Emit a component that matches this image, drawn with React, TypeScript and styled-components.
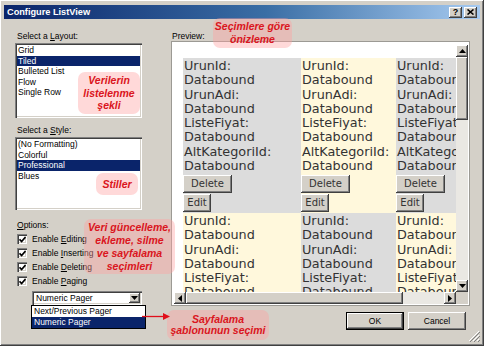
import styled, { createGlobalStyle } from 'styled-components'

const FACE = '#d4d0c8'
const UI_FONT = '"Liberation Sans", Arial, sans-serif'

const GlobalStyle = createGlobalStyle`
  html, body { margin: 0; padding: 0; background: ${FACE}; }
  body { font-family: ${UI_FONT}; font-size: 8.5px; color: #000; }
  * { box-sizing: border-box; }
`

const raised = `box-shadow: inset -1px -1px #404040, inset 1px 1px #fff, inset -2px -2px #808080;`
const sunken = `box-shadow: inset 1px 1px #808080, inset 2px 2px #404040, inset -1px -1px #fff, inset -2px -2px ${FACE};`

const Window = styled.div`
    position: relative;
    width: 484px;
    height: 346px;
    padding: 5px 4px 4px 4px;
    background: ${FACE};
    display: flex;
    flex-direction: column;
    overflow: hidden;
    ${raised}
`

const TitleBar = styled.div`
    height: 14px;
    display: flex;
    align-items: center;
    justify-content: space-between;
    padding: 0 3px;
    background: linear-gradient(90deg, #0a246a 0%, #3a6ea5 55%, #a6caf0 100%);
`

const TitleText = styled.span`
    color: #fff;
    font-weight: bold;
    font-size: 9.2px;
`

const TitleButtons = styled.div`
    display: flex;
    gap: 2px;
`

const TitleButton = styled.div`
    width: 13px;
    height: 11px;
    background: ${FACE};
    ${raised}
    display: flex;
    align-items: center;
    justify-content: center;
    font-weight: bold;
    font-size: 9px;
    line-height: 1;
`

const Body = styled.div`
    flex: 1;
    display: flex;
    gap: 25px;
    padding: 12px 10px 0 11px;
`

const LeftColumn = styled.div`
    width: 131px;
    display: flex;
    flex-direction: column;
`

const FieldLabel = styled.div<{ $top?: number }>`
    height: 11px;
    line-height: 11px;
    padding-left: 2px;
    margin-top: ${(p) => p.$top ?? 0}px;
`

const ListBox = styled.div<{ $height: number }>`
    width: 127px;
    height: ${(p) => p.$height}px;
    margin-top: 1px;
    padding: 2px;
    background: #fff;
    ${sunken}
`

const ListItem = styled.div<{ $selected?: boolean }>`
    height: 10.5px;
    line-height: 10.5px;
    padding-left: 1px;
    white-space: nowrap;
    background: ${(p) => (p.$selected ? '#0a246a' : 'transparent')};
    color: ${(p) => (p.$selected ? '#fff' : '#000')};
`

const CheckList = styled.div`
    margin-top: 1px;
    display: flex;
    flex-direction: column;
`

const CheckRow = styled.label`
    height: 14px;
    display: flex;
    align-items: center;
    gap: 5px;
    padding-left: 2px;
`

const CheckBox = styled.span`
    width: 10px;
    height: 10px;
    background: #fff;
    ${sunken}
    display: flex;
    align-items: center;
    justify-content: center;
`

const SelectWrap = styled.div`
    position: relative;
    margin: 3px 0 0 17px;
    width: 110px;
    height: 14px;
    padding: 2px;
    background: #fff;
    ${sunken}
    display: flex;
    align-items: center;
`

const SelectText = styled.span`
    flex: 1;
    padding-left: 2px;
    line-height: 10px;
`

const SelectArrow = styled.span`
    width: 11px;
    height: 10px;
    background: ${FACE};
    ${raised}
    display: flex;
    align-items: center;
    justify-content: center;
`

const PopupList = styled.div`
    position: absolute;
    top: 14px;
    left: -1px;
    width: 115px;
    background: #fff;
    border: 1px solid #000;
    z-index: 2;
`

const PopupItem = styled.div<{ $selected?: boolean }>`
    height: 11px;
    line-height: 11px;
    padding-left: 2px;
    background: ${(p) => (p.$selected ? '#0a246a' : '#fff')};
    color: ${(p) => (p.$selected ? '#fff' : '#000')};
`

const RightColumn = styled.div`
    flex: 1;
    display: flex;
    flex-direction: column;
`

const PreviewLabel = styled.div`
    height: 10px;
    line-height: 10px;
    padding-left: 1px;
`

const PreviewBox = styled.div`
    height: 265px;
    background: #fff;
    border: 1px solid #9c9a94;
    padding: 3px 1px 1px 2px;
`

const Scroller = styled.div`
    height: 100%;
    display: grid;
    grid-template-columns: 1fr 12px;
    grid-template-rows: 1fr 12px;
    min-height: 0;
`

const Viewport = styled.div`
    overflow: hidden;
    min-height: 0;
    background: #fff;
    padding: 13px 0 0 9px;
`

const TileGrid = styled.div`
    display: grid;
    grid-template-columns: 118px 95px 96px;
    width: max-content;
`

const Tile = styled.div<{ $alt?: boolean; $height: number }>`
    height: ${(p) => p.$height}px;
    padding: 1px 0 0 1px;
    background: ${(p) => (p.$alt ? '#fff8dc' : '#dcdcdc')};
    color: #333;
    font-family: "DejaVu Sans", Verdana, sans-serif;
    font-size: 12.8px;
    line-height: 14.3px;
    white-space: nowrap;
    overflow: hidden;
`

const TileButton = styled.div<{ $width: number; $top: number }>`
    width: ${(p) => p.$width}px;
    height: 18px;
    margin-top: ${(p) => p.$top}px;
    margin-left: -1px;
    background: ${FACE};
    ${raised}
    color: #333;
    font-size: 10px;
    line-height: 18px;
    text-align: center;
`

const VScroll = styled.div`
    grid-column: 2;
    grid-row: 1;
    display: flex;
    flex-direction: column;
`

const HScroll = styled.div`
    grid-column: 1;
    grid-row: 2;
    display: flex;
`

const ScrollArrow = styled.div`
    flex: 0 0 12px;
    width: 12px;
    height: 12px;
    background: ${FACE};
    ${raised}
    display: flex;
    align-items: center;
    justify-content: center;
`

const ScrollThumb = styled.div<{ $size: number }>`
    flex: 0 0 ${(p) => p.$size}px;
    background: ${FACE};
    ${raised}
`

const ScrollTrack = styled.div`
    flex: 1;
    background: #eae8e3;
`

const Corner = styled.div`
    background: ${FACE};
`

const Footer = styled.div`
    display: flex;
    justify-content: flex-end;
    gap: 4px;
    margin-top: 6px;
    padding-right: 4px;
`

const DialogButton = styled.div<{ $default?: boolean }>`
    width: 58px;
    height: 18px;
    background: ${FACE};
    ${(p) =>
        p.$default
            ? `border: 1px solid #000; box-shadow: inset -1px -1px #404040, inset 1px 1px #fff, inset -2px -2px #808080;`
            : raised}
    display: flex;
    align-items: center;
    justify-content: center;
`

const Callout = styled.div<{ $x: number; $y: number; $w: number; $h: number; $lh?: number }>`
    position: absolute;
    left: ${(p) => p.$x}px;
    top: ${(p) => p.$y}px;
    width: ${(p) => p.$w}px;
    height: ${(p) => p.$h}px;
    border-radius: 7px;
    background: rgba(255, 160, 160, 0.4);
    color: #da1520;
    font-family: ${UI_FONT};
    font-size: 10.5px;
    font-weight: bold;
    font-style: italic;
    line-height: ${(p) => p.$lh ?? 12.6}px;
    text-align: center;
    display: flex;
    flex-direction: column;
    justify-content: center;
    white-space: nowrap;
    z-index: 3;
`

const PointerArrow = styled.svg`
    position: absolute;
    left: 142px;
    top: 312px;
    z-index: 3;
`

const ResizeGrip = styled.svg`
    position: absolute;
    right: 4px;
    bottom: 4px;
`

const Triangle = ({ dir }: { dir: 'up' | 'down' | 'left' | 'right' }) => {
    const pts = {
        up: '0,4 7,4 3.5,0',
        down: '0,0 7,0 3.5,4',
        left: '4,0 4,7 0,3.5',
        right: '0,0 0,7 4,3.5',
    }[dir]
    const vertical = dir === 'up' || dir === 'down'
    return (
        <svg width={vertical ? 7 : 4} height={vertical ? 4 : 7}>
            <polygon points={pts} fill="#000" />
        </svg>
    )
}

const fields = ['UrunId:', 'UrunAdi:', 'ListeFiyat:', 'AltKategoriId:']

// first row shows the whole item, second row is cut by the preview's bottom edge
const ProductTile = ({ alt, full }: { alt: boolean; full: boolean }) => (
    <Tile $alt={alt} $height={full ? 155 : 80}>
        {(full ? fields : fields.slice(0, 3)).map((f) => (
            <div key={f}>
                <div>{f}</div>
                <div>Databound</div>
            </div>
        ))}
        {full && (
            <>
                <TileButton $width={49} $top={1.6}>
                    Delete
                </TileButton>
                <TileButton $width={28} $top={1}>
                    Edit
                </TileButton>
            </>
        )}
    </Tile>
)

const layouts = ['Grid', 'Tiled', 'Bulleted List', 'Flow', 'Single Row']
const styles = ['(No Formatting)', 'Colorful', 'Professional', 'Blues']
const options: [string, string, string][] = [
    ['Enable ', 'E', 'diting'],
    ['Enable ', 'I', 'nserting'],
    ['Enable ', 'D', 'eleting'],
    ['Enable ', 'P', 'aging'],
]

const Check = () => (
    <svg width="7" height="7" viewBox="0 0 7 7">
        <polyline points="0.5,3.3 2.6,5.5 6.5,1" fill="none" stroke="#000" strokeWidth="1.7" />
    </svg>
)

export default function App() {
    return (
        <>
            <GlobalStyle />
            <Window>
                <TitleBar>
                    <TitleText>Configure ListView</TitleText>
                    <TitleButtons>
                        <TitleButton>?</TitleButton>
                        <TitleButton>
                            <svg width="7" height="6" viewBox="0 0 7 6">
                                <path d="M0.5 0.5 L6.5 5.5 M6.5 0.5 L0.5 5.5" stroke="#000" strokeWidth="1.6" />
                            </svg>
                        </TitleButton>
                    </TitleButtons>
                </TitleBar>
                <Body>
                    <LeftColumn>
                        <FieldLabel>
                            Select a <u>L</u>ayout:
                        </FieldLabel>
                        <ListBox $height={75}>
                            {layouts.map((l) => (
                                <ListItem key={l} $selected={l === 'Tiled'}>
                                    {l}
                                </ListItem>
                            ))}
                        </ListBox>
                        <FieldLabel $top={7}>
                            Select a <u>S</u>tyle:
                        </FieldLabel>
                        <ListBox $height={73}>
                            {styles.map((s) => (
                                <ListItem key={s} $selected={s === 'Professional'}>
                                    {s}
                                </ListItem>
                            ))}
                        </ListBox>
                        <FieldLabel $top={10}>
                            <u>O</u>ptions:
                        </FieldLabel>
                        <CheckList>
                            {options.map(([a, k, b]) => (
                                <CheckRow key={b}>
                                    <CheckBox>
                                        <Check />
                                    </CheckBox>
                                    <span>
                                        {a}
                                        <u>{k}</u>
                                        {b}
                                    </span>
                                </CheckRow>
                            ))}
                        </CheckList>
                        <SelectWrap>
                            <SelectText>Numeric Pager</SelectText>
                            <SelectArrow>
                                <Triangle dir="down" />
                            </SelectArrow>
                            <PopupList>
                                <PopupItem>Next/Previous Pager</PopupItem>
                                <PopupItem $selected>Numeric Pager</PopupItem>
                            </PopupList>
                        </SelectWrap>
                    </LeftColumn>
                    <RightColumn>
                        <PreviewLabel>Preview:</PreviewLabel>
                        <PreviewBox>
                            <Scroller>
                                <Viewport>
                                    <TileGrid>
                                        {[0, 1, 2, 3, 4, 5].map((i) => (
                                            <ProductTile key={i} alt={i % 2 === 1} full={i < 3} />
                                        ))}
                                    </TileGrid>
                                </Viewport>
                                <VScroll>
                                    <ScrollArrow>
                                        <Triangle dir="up" />
                                    </ScrollArrow>
                                    <ScrollThumb $size={63} />
                                    <ScrollTrack />
                                    <ScrollArrow>
                                        <Triangle dir="down" />
                                    </ScrollArrow>
                                </VScroll>
                                <HScroll>
                                    <ScrollArrow>
                                        <Triangle dir="left" />
                                    </ScrollArrow>
                                    <ScrollThumb $size={217} />
                                    <ScrollTrack />
                                    <ScrollArrow>
                                        <Triangle dir="right" />
                                    </ScrollArrow>
                                </HScroll>
                                <Corner />
                            </Scroller>
                        </PreviewBox>
                        <Footer>
                            <DialogButton $default>OK</DialogButton>
                            <DialogButton>Cancel</DialogButton>
                        </Footer>
                    </RightColumn>
                </Body>

                <Callout $x={213} $y={18} $w={79} $h={30}>
                    <span>Seçimlere göre</span>
                    <span>önizleme</span>
                </Callout>
                <Callout $x={78} $y={72} $w={62} $h={42}>
                    <span>Verilerin</span>
                    <span>listelenme</span>
                    <span>şekli</span>
                </Callout>
                <Callout $x={96} $y={173} $w={42} $h={22}>
                    <span>Stiller</span>
                </Callout>
                <Callout $x={84} $y={219} $w={91} $h={55} $lh={13}>
                    <span>Veri güncelleme,</span>
                    <span>ekleme, silme</span>
                    <span>ve sayfalama</span>
                    <span>seçimleri</span>
                </Callout>
                <Callout $x={167} $y={310} $w={102} $h={30} $lh={11}>
                    <span>Sayfalama</span>
                    <span>şablonunun seçimi</span>
                </Callout>
                <PointerArrow width="28" height="9" viewBox="0 0 28 9">
                    <line x1="0" y1="4.5" x2="22" y2="4.5" stroke="#e0101c" strokeWidth="1.3" />
                    <polygon points="21,1 28,4.5 21,8" fill="#e0101c" />
                </PointerArrow>
                <ResizeGrip width="12" height="12" viewBox="0 0 12 12">
                    <path d="M11 1 L1 11 M11 5 L5 11 M11 9 L9 11" stroke="#fff" strokeWidth="1" />
                    <path d="M12 2 L2 12 M12 6 L6 12 M12 10 L10 12" stroke="#808080" strokeWidth="1" />
                </ResizeGrip>
            </Window>
        </>
    )
}
